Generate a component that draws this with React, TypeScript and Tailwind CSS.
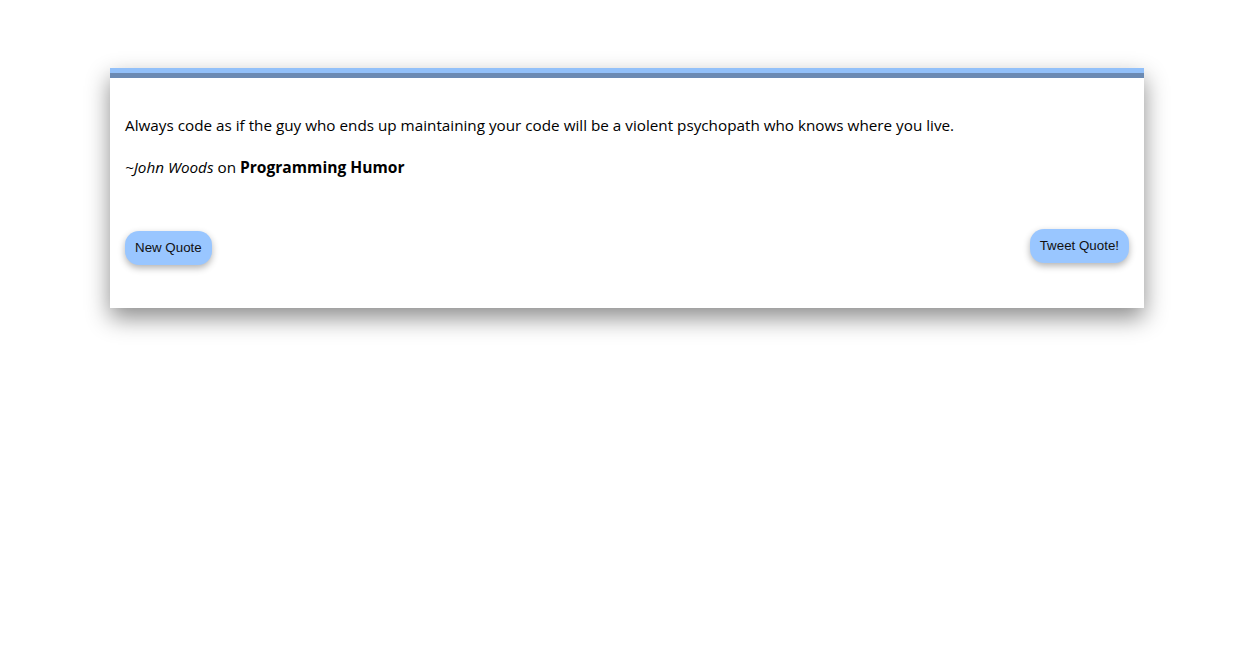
export default function App() {
  return (
    <div className="min-h-screen bg-white pt-[68px]">
      <div
        className="mx-auto w-[1034px] bg-white shadow-[0_10px_22px_rgba(0,0,0,0.45)]"
        style={{ fontFamily: '"Open Sans", "Noto Sans", sans-serif' }}
      >
        <div className="h-[5px] bg-[#92c0f9]" />
        <div className="h-[5px] bg-[#6b8ab3]" />
        <div className="px-[15px] pt-[36px] pb-[43px] text-[15.25px] text-black">
          <p className="leading-[22px]">
            Always code as if the guy who ends up maintaining your code will be a violent psychopath who knows where you live.
          </p>
          <p className="mt-[20px] leading-[22px]">
            <i>~John Woods</i> on <b className="text-[15.6px]">Programming Humor</b>
          </p>
          <div
            className="mt-[51px] flex items-start justify-between"
            style={{ fontFamily: '"Liberation Sans", Arial, sans-serif' }}
          >
            <button className="mt-[2px] h-[34px] rounded-[14px] bg-[#99c6ff] px-[10px] text-[13.33px] text-[#111] shadow-[0_3px_7px_rgba(0,0,0,0.3)]">
              New Quote
            </button>
            <button className="h-[34px] rounded-[14px] bg-[#99c6ff] px-[10px] text-[13.33px] text-[#111] shadow-[0_3px_7px_rgba(0,0,0,0.3)]">
              Tweet Quote!
            </button>
          </div>
        </div>
      </div>
    </div>
  );
}
